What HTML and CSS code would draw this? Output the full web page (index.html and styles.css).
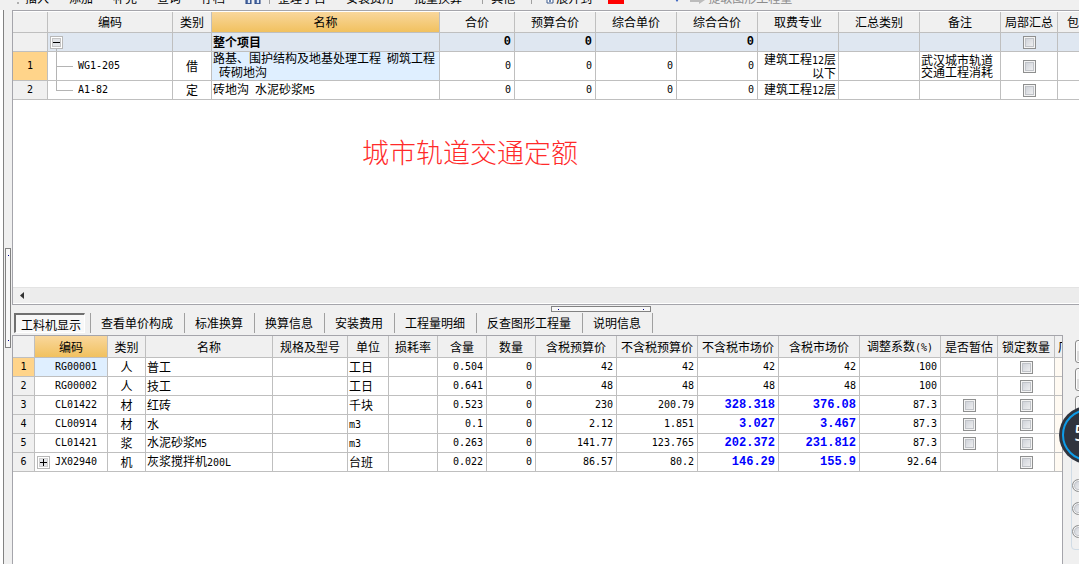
FILE: index.html
```html
<!DOCTYPE html>
<html lang="zh-CN">
<head>
<meta charset="utf-8">
<title>城市轨道交通定额</title>
<link rel="stylesheet" href="styles.css">
</head>
<body>
<header class="toolbar">
  <span class="grip"></span>
  <button>插入</button>
  <button>添加</button>
  <button>补充</button>
  <button>查询</button>
  <button>存档</button>
  <button aria-label="查找"><svg width="16" height="12" viewBox="0 0 16 12"><path d="M1 3h5v9H1zM10 3h5v9h-5z" fill="#5a78b0" stroke="#24407c"/><path d="M3 7h2v4H3zM12 7h2v4h-2z" fill="#dce8f8"/></svg></button>
  <span class="divider"></span>
  <button>整理子目</button>
  <button>安装费用</button>
  <button>批量换算</button>
  <span class="divider divider-spaced"></span>
  <button>其他</button>
  <span class="divider divider-even"></span>
  <button class="with-icon"><svg width="8" height="12" viewBox="0 0 8 12"><path d="M1 1h6v10H1z" fill="#fff" stroke="#3c5a8c"/><path d="M3 6h2v4H3z" fill="#6a86b4"/></svg>展开到</button>
  <span class="swatch"></span>
  <svg class="arrow" width="6" height="5" viewBox="0 0 6 5"><path d="M1 0h4L3 3z" fill="#3a62c0"/></svg>
  <button class="with-icon" disabled><svg width="16" height="12" viewBox="0 0 16 12"><path d="M0 6h9V3l6 5-6 4v-2H0z" fill="#bcbcbc"/></svg>提取图形工程量</button>
</header>

<div class="workspace">
  <div class="edge"></div>
  <div class="side-splitter"><span class="side-handle"></span></div>
  <div class="panes">
    <section class="upper">
      <table class="grid items">
        <colgroup><col class="w35"><col class="w125"><col class="w39"><col class="w228"><col class="w75"><col class="w81"><col class="w81"><col class="w81"><col class="w81"><col class="w81"><col class="w81"><col class="w57"><col></colgroup>
        <thead><tr><th></th><th>编码</th><th>类别</th><th class="current">名称</th><th>合价</th><th>预算合价</th><th>综合单价</th><th>综合合价</th><th>取费专业</th><th>汇总类别</th><th>备注</th><th>局部汇总</th><th class="cut">包含</th></tr></thead>
        <tbody>
          <tr class="total"><th></th>
            <td class="tree"><svg width="26" height="18" viewBox="0 0 26 18" shape-rendering="crispEdges"><rect x="2.500" y="3.500" width="12" height="12" fill="#fff" stroke="#b8b8b8"/><rect x="4.500" y="5.500" width="8" height="8" fill="#e2e4e8" stroke="#c4c4c4"/><path d="M5 9.500h7" stroke="#000"/><path d="M8.500 16v2" stroke="#b4b4b4"/></svg></td>
            <td></td><td>整个项目</td><td class="n">0</td><td class="n">0</td><td></td><td class="n">0</td><td></td><td></td><td></td><td class="c"><input type="checkbox" aria-label="局部汇总 整个项目"></td><td></td></tr>
          <tr class="tall"><th class="current">1</th>
            <td class="tree"><span class="node"><svg width="30" height="28" viewBox="0 0 30 28" shape-rendering="crispEdges"><path d="M8.500 0v28M9 14.500h16" fill="none" stroke="#b4b4b4"/></svg><span class="latin">WG1-205</span></span></td>
            <td class="c">借</td><td class="focus">路基、围护结构及地基处理工程<span class="latin">&nbsp;</span>砌筑工程<br><span class="latin">&nbsp;</span>砖砌地沟</td><td class="n">0</td><td class="n">0</td><td class="n">0</td><td class="n">0</td><td class="r">建筑工程<span class="latin">12</span>层<br>以下</td><td></td><td>武汉城市轨道交通工程消耗</td><td class="c"><input type="checkbox" aria-label="局部汇总 WG1-205"></td><td></td></tr>
          <tr><th>2</th>
            <td class="tree"><span class="node"><svg width="30" height="18" viewBox="0 0 30 18" shape-rendering="crispEdges"><path d="M8.500 -1v11M8 9.500h17" fill="none" stroke="#b4b4b4"/></svg><span class="latin">A1-82</span></span></td>
            <td class="c">定</td><td>砖地沟<span class="latin">&nbsp;</span>水泥砂浆<span class="latin">M5</span></td><td class="n">0</td><td class="n">0</td><td class="n">0</td><td class="n">0</td><td class="r">建筑工程<span class="latin">12</span>层</td><td></td><td></td><td class="c"><input type="checkbox" aria-label="局部汇总 A1-82"></td><td></td></tr>
        </tbody>
      </table>
      <p class="note">城市轨道交通定额</p>
      <div class="scrollbar"><button aria-label="向左滚动"><svg width="5" height="8" viewBox="0 0 5 8"><path d="M4 0v7L0 3.500z" fill="#333"/></svg></button></div>
    </section>

    <div class="pane-splitter"><span class="pane-handle"></span></div>

    <nav class="tabs">
      <button class="active"><span>工料机显示</span></button>
      <button>查看单价构成</button>
      <button>标准换算</button>
      <button>换算信息</button>
      <button>安装费用</button>
      <button>工程量明细</button>
      <button>反查图形工程量</button>
      <button>说明信息</button>
    </nav>

    <div class="lower">
      <section class="details">
        <table class="grid">
          <colgroup><col class="w22"><col class="w73"><col class="w38"><col class="w127"><col class="w75"><col class="w41"><col class="w49"><col class="w49"><col class="w49"><col class="w81"><col class="w81"><col class="w81"><col class="w81"><col class="w81"><col class="w57"><col class="w57"><col></colgroup>
          <thead><tr><th></th><th class="current">编码</th><th>类别</th><th>名称</th><th>规格及型号</th><th>单位</th><th>损耗率</th><th>含量</th><th>数量</th><th>含税预算价</th><th>不含税预算价</th><th>不含税市场价</th><th>含税市场价</th><th>调整系数<span class="latin">(%)</span></th><th>是否暂估</th><th>锁定数量</th><th class="cut">厂</th></tr></thead>
          <tbody>
            <tr><th class="current">1</th><td class="code focus">RG00001</td><td class="c">人</td><td>普工</td><td></td><td>工日</td><td></td><td class="n">0.504</td><td class="n">0</td><td class="n">42</td><td class="n">42</td><td class="n">42</td><td class="n">42</td><td class="n">100</td><td></td><td class="c"><input type="checkbox" aria-label="锁定数量 RG00001"></td><td class="warm"></td></tr>
            <tr><th>2</th><td class="code">RG00002</td><td class="c">人</td><td>技工</td><td></td><td>工日</td><td></td><td class="n">0.641</td><td class="n">0</td><td class="n">48</td><td class="n">48</td><td class="n">48</td><td class="n">48</td><td class="n">100</td><td></td><td class="c"><input type="checkbox" aria-label="锁定数量 RG00002"></td><td class="warm"></td></tr>
            <tr><th>3</th><td class="code">CL01422</td><td class="c">材</td><td>红砖</td><td></td><td>千块</td><td></td><td class="n">0.523</td><td class="n">0</td><td class="n">230</td><td class="n">200.79</td><td class="n market">328.318</td><td class="n market">376.08</td><td class="n">87.3</td><td class="c"><input type="checkbox" aria-label="是否暂估 CL01422"></td><td class="c"><input type="checkbox" aria-label="锁定数量 CL01422"></td><td class="warm"></td></tr>
            <tr><th>4</th><td class="code">CL00914</td><td class="c">材</td><td>水</td><td></td><td><span class="latin">m3</span></td><td></td><td class="n">0.1</td><td class="n">0</td><td class="n">2.12</td><td class="n">1.851</td><td class="n market">3.027</td><td class="n market">3.467</td><td class="n">87.3</td><td class="c"><input type="checkbox" aria-label="是否暂估 CL00914"></td><td class="c"><input type="checkbox" aria-label="锁定数量 CL00914"></td><td class="warm"></td></tr>
            <tr><th>5</th><td class="code">CL01421</td><td class="c">浆</td><td>水泥砂浆<span class="latin">M5</span></td><td></td><td><span class="latin">m3</span></td><td></td><td class="n">0.263</td><td class="n">0</td><td class="n">141.77</td><td class="n">123.765</td><td class="n market">202.372</td><td class="n market">231.812</td><td class="n">87.3</td><td class="c"><input type="checkbox" aria-label="是否暂估 CL01421"></td><td class="c"><input type="checkbox" aria-label="锁定数量 CL01421"></td><td class="warm"></td></tr>
            <tr><th>6</th><td class="tree"><span class="node"><svg class="plus" width="17" height="18" viewBox="0 0 17 18" shape-rendering="crispEdges"><rect x="2.500" y="3.500" width="12" height="12" fill="#fff" stroke="#b8b8b8"/><rect x="4.500" y="5.500" width="8" height="8" fill="#e2e4e8" stroke="#d0d0d0"/><path d="M5 9.500h7M8.500 6v7" stroke="#000"/></svg><span class="latin">JX02940</span></span></td><td class="c">机</td><td>灰浆搅拌机<span class="latin">200L</span></td><td></td><td>台班</td><td></td><td class="n">0.022</td><td class="n">0</td><td class="n">86.57</td><td class="n">80.2</td><td class="n market">146.29</td><td class="n market">155.9</td><td class="n">92.64</td><td></td><td class="c"><input type="checkbox" aria-label="锁定数量 JX02940"></td><td class="warm"></td></tr>
          </tbody>
        </table>
      </section>
      <aside class="actions">
        <button aria-label="操作一"></button>
        <button aria-label="操作二"></button>
        <button aria-label="操作三"></button>
        <fieldset>
          <input type="radio" name="scope" aria-label="选项一">
          <input type="radio" name="scope" aria-label="选项二">
          <input type="radio" name="scope" aria-label="选项三">
        </fieldset>
        <div class="gauge"><span>5</span></div>
      </aside>
    </div>
  </div>
</div>
</body>
</html>
```

FILE: styles.css
```css
* { box-sizing: border-box; }

body {
  margin: 0;
  height: 100vh;
  overflow: hidden;
  display: flex;
  flex-direction: column;
  background: #f0f0f0;
  color: #000;
  font: 12px/12px "Noto Sans CJK SC", "Liberation Sans", sans-serif;
}

button {
  margin: 0;
  padding: 0;
  border: 0;
  background: none;
  color: inherit;
  font: inherit;
  white-space: nowrap;
}

svg { display: block; flex: none; }

.latin, .n, .code, .grid tbody th {
  font-family: "DejaVu Sans Mono", monospace;
  font-size: 10px;
}

/* Toolbar */
.toolbar {
  flex: none;
  display: flex;
  align-items: flex-end;
  gap: 20px;
  height: 4px;
  margin-bottom: 6px;
  padding-left: 17px;
}
.toolbar button { flex: none; }
.toolbar button:disabled { color: #8c8c8c; }
.grip { width: 2px; height: 2px; margin-right: -14px; background: #b0b0b0; }
.divider { width: 1px; height: 4px; margin: 0 -12px; background: #a0a0a0; }
.divider-spaced { margin-left: 0; }
.divider-even { margin: 0 -6px 0 -4px; }
.with-icon { display: flex; gap: 2px; }
.swatch { width: 16px; height: 4px; margin-left: -4px; background: #f00; }
.arrow { margin: 0 -10px 0 30px; }

/* Frame */
.workspace { flex: 1; min-height: 0; display: flex; overflow: hidden; }
.edge { width: 4px; background: #fff; border-right: 1px solid #828282; }
.side-splitter { width: 8px; padding: 238px 1px 0; }
.side-handle, .pane-handle {
  display: flex;
  justify-content: space-between;
  border: 1px solid #828282;
  background: #f8f8f8;
}
.side-handle {
  flex-direction: column;
  align-items: center;
  height: 100px;
  padding: 6px 0;
}
.side-handle::before, .side-handle::after,
.pane-handle::before, .pane-handle::after {
  content: "";
  width: 1px;
  height: 1px;
  background: #00008b;
}
.panes { flex: 1; min-width: 0; display: flex; flex-direction: column; }

.upper {
  flex: none;
  display: flex;
  flex-direction: column;
  height: 295px;
  border: 1px solid #a5a5ab;
  border-right: 0;
  background: #fff;
  padding-top: 1px;
}

/* Data grids */
.grid {
  width: 100%;
  table-layout: fixed;
  border-collapse: separate;
  border-spacing: 0;
}
.grid th, .grid td {
  height: 19px;
  padding: 0 2px;
  border-right: 1px solid #bfbfbf;
  border-bottom: 1px solid #bfbfbf;
  overflow: hidden;
  text-align: left;
  vertical-align: middle;
}
.grid th {
  padding: 0;
  background: #f0f0f0;
  font-weight: 400;
  text-align: center;
  white-space: nowrap;
}
.grid thead th { height: 21px; }
.grid thead .cut { padding-left: 9px; border-right: 0; text-align: left; }
.details .grid thead .cut { padding-left: 3px; }
.grid td { padding-left: 1px; }
.grid td:last-child { border-right: 0; }
.grid thead .current { background: linear-gradient(#f9d79c, #f1c15f); }
.grid tbody .current { background: #ffd48a; }
.grid .c { padding: 0; text-align: center; }
.grid .r { text-align: right; }
.grid .n { text-align: right; padding-right: 3px; }
.grid .code { padding-left: 20px; }
.grid .tree { padding: 0; }
.grid .focus { background: #dfefff; }
.grid .warm { background: #fffaf2; }
.grid .total td { background: #dfe7f1; font-weight: 700; }
.grid .total .n, .grid .market {
  font-family: "Liberation Mono", monospace;
  font-size: 12px;
  font-weight: 700;
}
.grid .market { color: #00f; }
.grid .tall td { height: 29px; }
.node { display: flex; align-items: center; }
.plus { margin-right: 3px; }

.w22 { width: 22px; }
.w35 { width: 35px; }
.w38 { width: 38px; }
.w39 { width: 39px; }
.w41 { width: 41px; }
.w49 { width: 49px; }
.w57 { width: 57px; }
.w73 { width: 73px; }
.w75 { width: 75px; }
.w81 { width: 81px; }
.w125 { width: 125px; }
.w127 { width: 127px; }
.w228 { width: 228px; }

input[type="checkbox"], input[type="radio"] {
  appearance: none;
  display: block;
  width: 13px;
  height: 13px;
  margin: 0 auto;
  border: 1px solid #8e8f8f;
  background: linear-gradient(135deg, #c8ccd4, #f6f6f6);
  box-shadow: inset 0 0 0 1px #f4f4f4, inset 0 0 0 2px #c0c3c8;
}

.note {
  margin: 36px 0 0 349px;
  color: #ff2a2a;
  font-size: 27px;
  font-weight: 300;
  line-height: 32px;
}

.scrollbar {
  display: flex;
  height: 17px;
  margin-top: auto;
  border-top: 1px solid #e3e3e3;
  border-bottom: 1px solid #fff;
  background: #ececec;
}
.scrollbar button { width: 17px; padding-left: 7px; background: #f0f0f0; }

.pane-splitter { flex: none; height: 8px; padding-top: 1px; }
.pane-handle {
  align-items: center;
  width: 100px;
  height: 6px;
  margin-left: calc(50% + 5px);
  padding: 0 6px;
}

/* Tabs */
.tabs { flex: none; display: flex; height: 22px; padding-left: 2px; }
.tabs button {
  height: 20px;
  padding: 0 11px 0 10px;
  border-right: 1px solid #a0a0a0;
}
.tabs .active { padding: 0 5px 0 0; }
.active span {
  display: block;
  height: 20px;
  padding: 4px 3px 0 5px;
  border: 1px solid #fff;
  border-top: 2px solid #707070;
  border-left: 2px solid #707070;
  background: #f8f8f8;
}

/* Lower pane */
.lower { flex: 1; min-height: 0; display: flex; }
.details {
  flex: 1;
  min-width: 0;
  border: 1px solid #a5a5ab;
  border-bottom: 0;
  background: #fff;
}
.details .grid thead th { height: 22px; }
.actions {
  position: relative;
  flex: none;
  width: 16px;
  padding: 5px 0 0 12px;
}
.actions button {
  display: block;
  width: 75px;
  height: 23px;
  margin-bottom: 5px;
  border: 1px solid #8a8a8a;
  border-radius: 3px;
  background: linear-gradient(#f4f4f4 50%, #dcdcdc 50%);
  box-shadow: inset 0 0 0 1px #fff;
}
.actions fieldset {
  display: grid;
  gap: 10px;
  width: 90px;
  height: 93px;
  margin: 38px 0 0 -4px;
  padding: 21px 0 0;
  border: 1px solid #d0dce6;
  border-radius: 4px;
  align-content: start;
}
.actions input[type="radio"] { margin: 0; border-radius: 50%; }
.gauge {
  position: absolute;
  top: 71px;
  left: -4px;
  width: 58px;
  height: 58px;
  padding: 3px;
  border-radius: 50%;
  background: #30343e;
}
.gauge span {
  display: block;
  height: 52px;
  padding-left: 10px;
  border: 2px solid #0e9ce8;
  border-radius: 50%;
  color: #fff;
  font: 22px/42px "Noto Sans", sans-serif;
}
```
